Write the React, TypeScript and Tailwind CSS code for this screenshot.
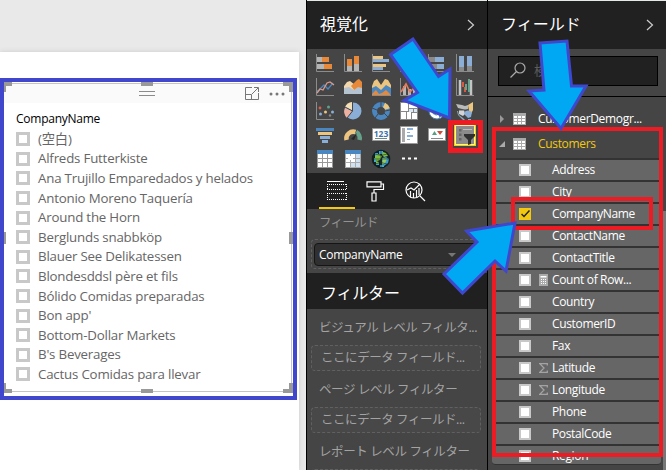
import type { ReactNode } from "react";

const companies = [
  "(空白)",
  "Alfreds Futterkiste",
  "Ana Trujillo Emparedados y helados",
  "Antonio Moreno Taquería",
  "Around the Horn",
  "Berglunds snabbköp",
  "Blauer See Delikatessen",
  "Blondesddsl père et fils",
  "Bólido Comidas preparadas",
  "Bon app'",
  "Bottom-Dollar Markets",
  "B's Beverages",
  "Cactus Comidas para llevar",
];

type Field = { name: string; kind?: "calc" | "sum"; checked?: boolean };

const fields: Field[] = [
  { name: "Address" },
  { name: "City" },
  { name: "CompanyName", checked: true },
  { name: "ContactName" },
  { name: "ContactTitle" },
  { name: "Count of Row...", kind: "calc" },
  { name: "Country" },
  { name: "CustomerID" },
  { name: "Fax" },
  { name: "Latitude", kind: "sum" },
  { name: "Longitude", kind: "sum" },
  { name: "Phone" },
  { name: "PostalCode" },
  { name: "Region" },
];

const OR = "#e8893a";
const GR = "#b5b5b5";
const BL = "#8aaed6";
const YE = "#ecc580";
const DB = "#4a86c0";
const AX = "#8c8c8c";

const axes = <path d="M.5 0V17.5H18" fill="none" stroke={AX} />;

const vizIcons: ReactNode[] = [
  <>{axes}<path d="M1 3h5v5H1zM1 10h7v5H1z" fill={GR} /><path d="M6 3h7v5H6zM8 10h8v5H8z" fill={OR} /></>,
  <>{axes}<path d="M3 12h5v5H3zM10 10h5v7h-5z" fill={GR} /><path d="M3 5h5v7H3zM10 2h5v8h-5z" fill={OR} /></>,
  <>{axes}<path d="M1 2h10v3H1zM1 10h13v3H1z" fill={YE} /><path d="M1 5h16v3H1zM1 13h10v3H1z" fill={BL} /></>,
  <>{axes}<path d="M2 4h3v13H2zM9 7h3v10H9z" fill={YE} /><path d="M5 7h3v10H5zM12 2h3v15h-3z" fill={BL} /></>,
  <>{axes}<path d="M1 3h6v5H1zM1 10h8v5H1z" fill="#898989" /><path d="M7 3h9v5H7zM9 10h7v5H9z" fill={BL} /></>,
  <>{axes}<path d="M3 13h5v4H3zM11 12h5v5h-5z" fill="#898989" /><path d="M3 2h5v11H3zM11 2h5v10h-5z" fill={BL} /></>,
  <>{axes}<path d="m1 13 2-1 5-5 4 4 5-6" fill="none" stroke={DB} strokeWidth="1.3" /><path d="m1 15 3-4 3 1 4-7 3-1 4 3" fill="none" stroke="#d99b8c" strokeWidth="1.3" /></>,
  <><path d="m0 8 3-4 3-1 5 4v9H0z" fill="#f2d7ab" /><path d="m7 8 6-6 2-1 3 3v8l-7 1z" fill={OR} /><path d="m0 10 5-1 5 3 4-3 4 1v6H0z" fill="#b5c3d0" /></>,
  <><path d="m0 8 2-5 3-2 4 6 4-6 3 1 3 5v9H0z" fill={YE} /><path d="m0 10 4-2 5 4 5-5 5 3v7H0z" fill={DB} /><path d="m0 16 4-4 3 4 3-1 4-3 4 4v1H0z" fill={OR} /><path d="M0 17.500h19" stroke={AX} /></>,
  <>{axes}<path d="M3 8h3v9H3zM8 11h3v6H8zM13 6h3v11h-3z" fill={GR} /><path d="m1 14 5-8 4 8 5-5" fill="none" stroke="#e57b5f" strokeWidth="1.600" /></>,
  <>{axes}<path d="M3 8h3v9H3zM8 11h3v6H8zM13 6h3v11h-3z" fill={GR} /></>,
  <>{axes}<path d="M4 17V2M15 2v15" stroke="#c4c4c4" strokeWidth="2.500" /><path d="M6 4h2v5H6zM8 9h2v5H8z" fill="#d9583f" /><path d="M9 6h2v6H9zM12 1h2v13h-2z" fill="#68a48d" /></>,
  <>{axes}<g fill="#d35f4c"><circle cx="4" cy="6" r="1.4" /><circle cx="14" cy="13.500" r="1.2" fill="#888" /></g><circle cx="12.500" cy="5" r="1.5" fill="#5fa18b" /><circle cx="9.500" cy="10" r="1.5" fill={YE} /><g fill={BL}><circle cx="4.500" cy="12" r="1.5" /><circle cx="16.500" cy="10" r="1.5" /></g></>,
  <><circle cx="9" cy="9" r="8.5" fill={BL} /><path d="M8 8V0A9 9 0 0 0 1 5z" fill="#f4dfb6" /><path d="M8 9 1 6a9 9 0 0 0 2 10z" fill="#eeb0a0" /><path d="M8.500 0v9L3 16M8.500 9 1 5" fill="none" stroke="#454545" /></>,
  <><circle cx="9" cy="9" r="6.500" fill="none" stroke={DB} strokeWidth="5" /><path d="M12 3a7 7 0 0 1 3.500 4" fill="none" stroke={YE} strokeWidth="5" /><path d="M9 0v5M18 8l-5 1M3 16l3-4M0 6l5 2M16 15l-4-4" stroke="#454545" /></>,
  <><path d="M0 0h18v18H0z" fill="#888" /><path d="M1 1h7v8H1zM9 1h8v5H9zM1 10h5v7H1zM7 10h4v7H7zM12 11h5v6h-5z" fill="#fff" /><path d="M9 7h4v3H9zM14 7h3v3h-3z" fill="#dbe8f5" /></>,
  <><circle cx="9" cy="9" r="8" fill="#fff" stroke="#4b81af" /><path d="m3 4 6-1 1 4-3 3 2 4-4-2-3-5z" fill="#6e9f9f" /><path d="m11 9 5-1-2 6-3 2z" fill={DB} /></>,
  <><path d="m0 2 6 1 3 1 3-1v4l-3 1-3-1-4-1z" fill="#bbb" /><path d="m12 3 5-3v8l-2 4-2-3z" fill={YE} /><path d="M3 8h5l1 4-2 2-4-2z" fill="#d2d5d8" /><path d="m8 10 4-2 4 2-1 5-3 1-3-3z" fill={BL} /><path d="M1 9h1l1 4 4 3 2 2H7l-5-5zM12 17h3v1h-3z" fill="#8fa9be" /><path d="M3 8h10" stroke="#555" fill="none" /></>,
  <><path d="M0 2h18v3H0z" fill={DB} /><path d="M2 6h14v3H2z" fill={YE} /><path d="M4 10h10v3H4z" fill={BL} /><path d="M6 14h6v3H6z" fill={BL} /></>,
  <><path d="M2.500 14a7 7 0 0 1 9-8" fill="none" stroke={YE} strokeWidth="4.500" /><path d="M12 6a7 7 0 0 1 3.500 8" fill="none" stroke="#68a18b" strokeWidth="4.500" /><path d="m7 13 6-6-3 7z" fill="#262626" /></>,
  <><path d="M.5 2.500h17v12H.5z" fill="#fff" stroke="#999" /><text x="9" y="10.500" textAnchor="middle" fontSize="8.500" fontWeight="700" fill="#4074a8">123</text><path d="M3 12.500h12" stroke="#6d897e" /></>,
  <><path d="M.5.500h17v17H.5z" fill="#fff" stroke="#999" /><path d="M2 2h3v14H2z" fill="#aaa" /><path d="M7 2h6v2H7zM7 6h3v1H7zM7 9h6v2H7zM7 13h3v1H7z" fill={BL} /></>,
  <><path d="M.5 2.500h17v12H.5z" fill="#fff" stroke="#999" /><path d="m4 9 2.500-4L9 9z" fill="#5c9c80" /><path d="m9 5 3 4 3-4z" fill="#cf4d38" /><path d="M3 12.500h12" stroke="#888" /></>,
  <><path d="M-2-2h22v22H-2z" fill="#f7d000" /><path d="M-1-1h20v20H-1z" fill="#fff4a8" /><path d="M0 0h18v18H0z" fill="#8b8b8b" /><path d="M7 3h9v1H7z" fill="#bcbcbc" /><path d="M3 3h2.500v2.500H3zM3 7.500h2.500V10H3zM3 12h2.500v2.500H3z" fill="#666" /><path d="M8 8h11v2l-4 4v4l-3 1v-5l-4-4z" fill="#303030" /></>,
  <g transform="translate(1)"><path d="M0 0h16v18H0z" fill="#999" /><path d="M0 0h16v4H0z" fill={DB} /><path d="M1 4h4v4H1zM6 4h4v4H6zM11 4h4v4h-4zM1 9h4v3H1zM6 9h4v3H6zM11 9h4v3h-4zM1 13h4v4H1zM6 13h4v4H6zM11 13h4v4h-4z" fill="#fff" /></g>,
  <g transform="translate(1)"><path d="M0 0h16v18H0z" fill="#aaa" /><path d="M0 0h16v4H0z" fill={DB} /><path d="M1 4h9v8H1zM1 13h4v4H1z" fill="#fff" /><path d="M11 4h4v4h-4zM11 9h4v3h-4zM11 13h4v4h-4zM6 13h4v4H6z" fill="#cfe0f1" /><path d="M5.500 4v2M5.500 10v3M1 8.500h2M8 8.500h3" stroke="#aaa" /></g>,
  <><circle cx="9" cy="9" r="9.300" fill="#14201f" /><path d="M3 3h3v3H3zM7 1h4v3H7zM2 8h2v4H2zM4 13h3v2H4zM8 15h4v2H8z" fill="#3fa7d6" /><path d="m3 6 4-2 3 2-2 4-3 1-2-1zM11 2l3 1 2 3-4 1-2-2zM4 11l3 1-1 2-2-1z" fill="#7fbe3f" /><path d="m10 8 4-1 3 2-1 4-4 3-2-4z" fill="#3b9bd0" /><path d="m11 8 4 1-2 4-3 2z" fill="#9ccb4d" /><path d="M9 0v18M1 9h16M3 4q6 3 12 0M3 14q6-3 12 0" stroke="#15302c" strokeWidth=".6" fill="none" /></>,
  <path d="M2 7.500h3v2H2zM8 7.500h3v2H8zM14 7.500h3v2h-3z" fill="#fff" />,
];

function PaneHeader({ children }: { children: ReactNode }) {
  return (
    <div className="flex h-12 shrink-0 items-center justify-between bg-[#212121] pr-3 pl-[13px] text-[16px] text-white">
      <span className="-mt-0.5">{children}</span>
      <svg width="8" height="12" viewBox="0 0 8 12" fill="none" stroke="#ccc" strokeWidth="1.2"><path d="m1 1 5.500 5L1 11" /></svg>
    </div>
  );
}

function DropWell() {
  return (
    <div className="flex h-[26px] w-[170px] items-center rounded border border-dashed border-[#606060] bg-[#484848] pl-[9px] text-[12.5px] tracking-[-0.45px] whitespace-nowrap text-[#a3a3a3]">
      ここにデータ フィールド...
    </div>
  );
}

function TableGlyph() {
  return (
    <svg width="13" height="12" viewBox="0 0 13 12"><path d="M0 0h13v12H0z" fill="#aaa" /><path d="M1 3h3v2H1zM5 3h3v2H5zM9 3h3v2H9zM1 6h3v2H1zM5 6h3v2H5zM9 6h3v2H9zM1 9h3v2H1zM5 9h3v2H5zM9 9h3v2H9z" fill="#fff" /></svg>
  );
}

function Slicer() {
  return (
    <div className="relative mt-[26px] h-[322px] w-[297px] border-4 border-[#4047cc] bg-white">
      <div className="mt-px mr-px h-[309px] border-t border-r border-b border-[#c4c4c4]">
        <div className="flex h-[19px] items-center bg-[#fafafa]">
          <div className="ml-[135px] h-[5px] w-4 border-y border-[#8b8b8b]" />
          <svg className="ml-[90px]" width="14" height="13" viewBox="0 0 14 13" fill="none" stroke="#777"><path d="M7 .5H.5v12h13V6M.5 7.500h6v5M7 7l6-6M9 .5h4.500V5" /></svg>
          <svg className="ml-[10px]" width="16" height="4" viewBox="0 0 16 4" fill="#777"><circle cx="2" cy="2" r="1.500" /><circle cx="8" cy="2" r="1.500" /><circle cx="14" cy="2" r="1.500" /></svg>
        </div>
        <div className="mt-[7px] pl-3 text-[12px]/[18px] tracking-[-0.25px] text-black">CompanyName</div>
        <div className="mt-px pl-3">
          {companies.map((name) => (
            <div key={name} className="flex h-[19.6px] items-center gap-2">
              <span className="mt-px size-[14px] shrink-0 border-[3px] border-[#c8c8c8] bg-white" />
              <span className="text-[13.3px]/[18px] tracking-[-0.2px] whitespace-nowrap text-[#666]">{name}</span>
            </div>
          ))}
        </div>
      </div>
      <svg className="absolute top-0 left-0" width="289" height="314" viewBox="0 0 289 314" fill="#999">
        <path d="M0 0h8v4H2v6H0zM137 0h12v4h-12zM279 0h10v10h-4V4h-6zM0 150h2v12H0zM285 150h4v12h-4zM0 301h2v6h6v4H0zM137 307h12v4h-12zM279 307h6v-6h4v10h-10z" />
      </svg>
    </div>
  );
}

function VisualizationPane() {
  return (
    <div className="flex w-[182px] shrink-0 flex-col overflow-hidden border-x border-black bg-[#454545]">
      <div className="h-px shrink-0 bg-[#e3eae7]" />
      <PaneHeader>視覚化</PaneHeader>
      <div className="grid h-[124px] shrink-0 auto-rows-[24px] grid-cols-[repeat(6,28px)] pt-[5px] pl-[9px]">
        {vizIcons.map((icon, i) => (
          <svg key={i} width="18" height="18" viewBox="0 0 18 18" overflow="visible">{icon}</svg>
        ))}
      </div>
      <div className="flex h-9 shrink-0 bg-[#212121] pl-3">
        <div className="flex w-9 justify-center border-b-2 border-[#f2c811] pt-2">
          <svg width="20" height="20" viewBox="0 0 20 20" fill="none" stroke="#fff"><path d="M0 .5h17" /><path d="M0 3.500h20M0 8.500h20M0 12.500h20M0 18.500h20M.5 3v6M19.500 3v6M.5 12v7M19.500 12v7" strokeDasharray="1 1" /></svg>
        </div>
        <div className="flex w-10 justify-center pt-2">
          <svg width="20" height="21" viewBox="0 0 20 21" fill="none" stroke="#fff" strokeWidth="1.2"><path d="M2 .8h14v5H2zM16 3h2.500v5.500H9V12M7 12h4v8H7z" /></svg>
        </div>
        <div className="flex w-10 justify-center pt-2">
          <svg width="21" height="21" viewBox="0 0 21 21" fill="none" stroke="#fff" strokeWidth="1.200"><circle cx="9" cy="9" r="8" /><path d="m15 15 5 5M2 9l4-2 3 2 6-6M5.500 10v6M8.500 12v5M11.500 9v7M14 7v7" /></svg>
        </div>
      </div>
      <div className="h-16 shrink-0 pt-1">
        <div className="pl-3 text-[12.5px]/[20px] tracking-[-0.7px] text-[#929292]">フィールド</div>
        <div className="mt-[6px] ml-1 h-[30px] w-[174px] rounded border border-dashed border-[#606060] p-[3px] pl-0.5">
          <div className="flex h-[23px] items-center justify-between rounded-sm border border-[#151515] bg-[#303030] pr-6 pl-1 text-[12px] tracking-[-0.3px] text-white">
            CompanyName
            <span className="border-x-4 border-t-4 border-x-transparent border-t-[#777]" />
          </div>
        </div>
      </div>
      <div className="flex h-9 shrink-0 items-center bg-[#202020] pt-1 pl-[14px] text-[16px] tracking-[-0.2px] text-white">フィルター</div>
      <div className="flex shrink-0 flex-col pl-1 text-[12.5px]/[20px] tracking-[-0.4px] whitespace-nowrap text-[#a3a3a3]">
        <div className="mt-[9px] mb-[7px] pl-2">ビジュアル レベル フィルタ...</div>
        <DropWell />
        <div className="mt-[9px] mb-[7px] pl-2">ページ レベル フィルター</div>
        <DropWell />
        <div className="mt-[9px] mb-[7px] pl-2">レポート レベル フィルター</div>
        <div className="h-[26px] w-[170px] rounded border border-dashed border-[#606060] bg-[#484848]" />
      </div>
    </div>
  );
}

function FieldRow({ field }: { field: Field }) {
  return (
    <div className="flex h-[22px] shrink-0 items-center border-t-2 border-[#333] bg-[#666] pl-[27px]">
      {field.checked ? (
        <span className="flex size-3 items-center justify-center bg-[#f2c811]">
          <svg width="9" height="8" viewBox="0 0 9 8" fill="none" stroke="#222" strokeWidth="1.500"><path d="m.5 4 2.500 2.500L8.500.500" /></svg>
        </span>
      ) : (
        <span className="size-3 border-2 border-[#c8c8c8] bg-white" />
      )}
      <span className="flex w-[21px] justify-center pl-1">
        {field.kind === "calc" && <svg width="9" height="12" viewBox="0 0 9 12"><path d="M0 0h9v12H0z" fill="#aaa" /><path d="M1.500 2h6v1.500h-6zM2 5h1v1H2zM4 5h1v1H4zM6 5h1v1H6zM2 7h1v1H2zM4 7h1v1H4zM6 7h1v1H6zM2 9h1v1H2zM4 9h1v1H4zM6 9h1v1H6z" fill="#fff" /></svg>}
        {field.kind === "sum" && <svg width="9" height="10" viewBox="0 0 9 10" fill="none" stroke="#a3a3a3" strokeWidth="1.300"><path d="M8.300 2.500V.7H.8L5 5 .8 9.300h7.500V7.500" /></svg>}
      </span>
      <span className="text-[12px] tracking-[-0.35px] text-white">{field.name}</span>
    </div>
  );
}

function FieldsPane() {
  return (
    <div className="flex min-w-0 flex-1 flex-col bg-[#454545]">
      <div className="h-px shrink-0 bg-[#e3eae7]" />
      <PaneHeader>フィールド</PaneHeader>
      <div className="h-12 shrink-0 border-b border-black pt-[7px] pl-[10px]">
        <div className="flex h-[30px] w-40 items-center gap-2 border border-black bg-[#212121] pl-[11px] text-[13px] text-[#5c5c5c]">
          <svg className="-mt-0.5" width="16" height="16" viewBox="0 0 16 16" fill="none" stroke="#aaa" strokeWidth="1.200"><circle cx="10" cy="6" r="5" /><path d="m6.500 9.500-6 6" /></svg>
          検索
        </div>
      </div>
      <div className="flex flex-1 overflow-hidden">
        <div className="ml-1 flex w-[169px] flex-col pt-[9px]">
          <div className="flex h-[25px] shrink-0 items-center pl-2 text-[12px] tracking-[-0.33px] text-white">
            <span className="mr-[9px] border-y-4 border-l-4 border-y-transparent border-l-[#999]" />
            <TableGlyph /><span className="ml-3">CustomerDemogr...</span>
          </div>
          <div className="flex h-[27px] shrink-0 items-center pb-0.5 pl-[7px] text-[12px] tracking-[-0.33px] text-[#f2c811]">
            <svg className="mr-2" width="6" height="6" viewBox="0 0 6 6"><path d="M6 0v6H0z" fill="#aaa" /></svg>
            <TableGlyph /><span className="ml-3">Customers</span>
          </div>
          <div className="h-[307px] shrink-0 overflow-hidden rounded-b border-b border-[#333]">
            {fields.map((field) => <FieldRow key={field.name} field={field} />)}
          </div>
        </div>
        <div className="mt-[114px] ml-0.5 flex-1 bg-[#777]" />
      </div>
    </div>
  );
}

export default function App() {
  return (
    <div className="relative flex h-[470px] w-[666px] overflow-hidden bg-[#e9e9e9] font-['Open_Sans','Noto_Sans_CJK_JP',sans-serif]">
      <div className="w-[306px] shrink-0 pt-[52px]">
        <div className="h-[418px] w-[299px] bg-white shadow-[0_0_5px_#ccc]"><div className="flow-root"><Slicer /></div></div>
      </div>
      <VisualizationPane />
      <FieldsPane />
      <div className="absolute top-[120px] left-[448px] h-[33px] w-[35px] border-[5px] border-[#ed1c24]" />
      <div className="absolute top-[127px] left-[492px] h-[330px] w-[171px] border-4 border-[#ed1c24]" />
      <div className="absolute top-[197px] left-[511px] h-[33px] w-[142px] border-4 border-[#ed1c24]" />
      <svg className="absolute inset-0" width="666" height="470" viewBox="0 0 666 470" fill="#00a8f3" stroke="#3f48cc" strokeWidth="3">
        <path d="m413 39-22.500 15.500L417.500 92.500 404 100.500 449.500 118 450 69 438.500 76.500z" />
        <path d="m540 43 27-2 4.500 45H586l-25 42.500L529 91l15-1z" />
        <path d="m515 223-48.500 8L477 242l-33 32 18.500 19L495 261l11 10z" />
      </svg>
    </div>
  );
}
